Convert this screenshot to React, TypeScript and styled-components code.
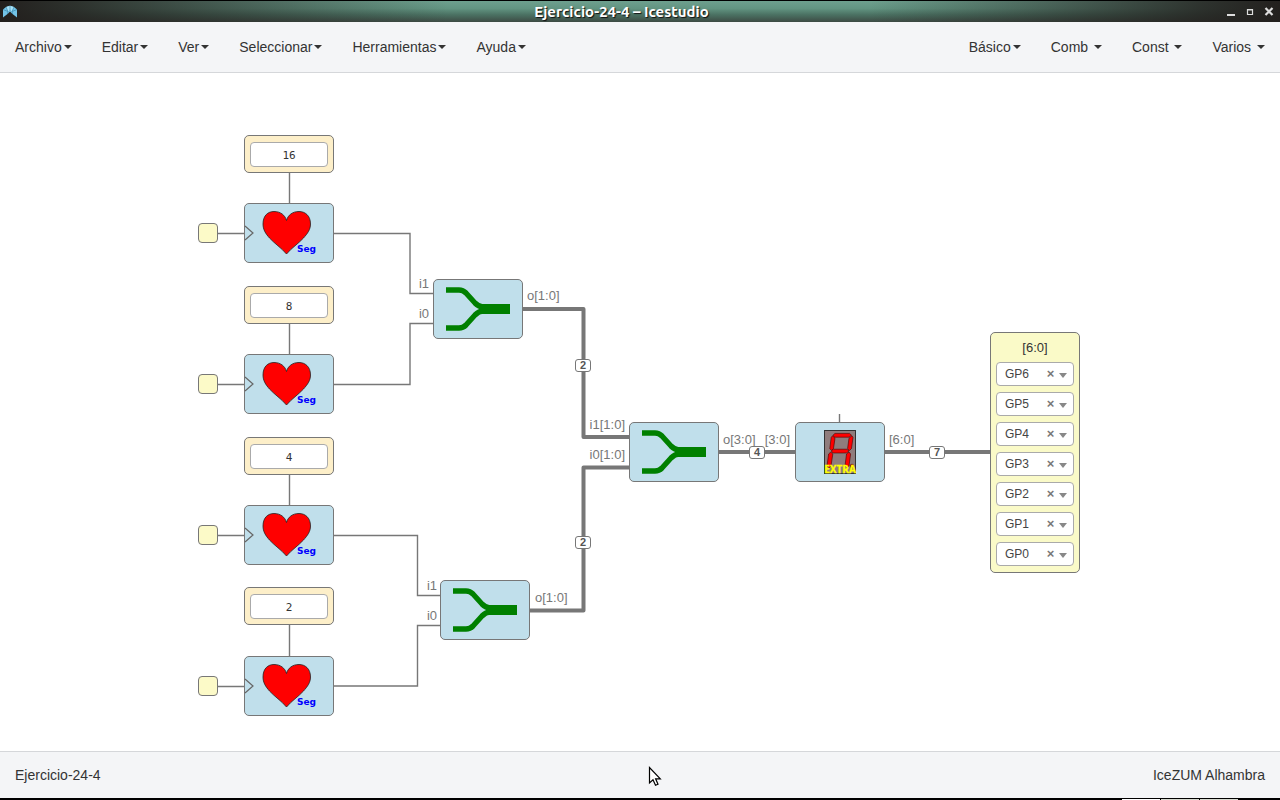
import React from "react";
import styled, { createGlobalStyle } from "styled-components";

const WIRE = "#777777";

const GlobalStyle = createGlobalStyle`
  * { box-sizing: border-box; }
  body {
    margin: 0;
    background: #fff;
    color: #333;
    font: 14px/20px "Liberation Sans", Arial, sans-serif;
  }
  button, input, select { font: inherit; color: inherit; }
`;

const Page = styled.div`
  min-height: 100vh;
  display: flex;
  flex-direction: column;
`;

/* ---------- window frame ---------- */

const TitleBar = styled.header`
  height: 22px;
  display: flex;
  align-items: center;
  border-top: 1px solid #000;
  background:
    linear-gradient(to right, #23201e 0, rgba(35, 32, 30, 0.85) 6%, rgba(35, 32, 30, 0) 35%, rgba(35, 32, 30, 0) 68%, rgba(35, 32, 30, 0.85) 94%, #23201e 100%),
    linear-gradient(#6ea08e 0, #639582 35%, #4b7263 65%, #3d4b44 100%);
`;

const AppIcon = styled.svg`
  display: block;
  width: 16px;
  height: 14px;
  margin-left: 2px;
`;

const WindowTitle = styled.h1`
  flex: 1;
  margin: 0;
  text-align: center;
  font: 700 15px/20px Ubuntu, "Noto Sans", sans-serif;
  color: #fff;
  text-shadow: 1px 1px 1px #111;
`;

const WindowButtons = styled.div`
  display: flex;
  justify-content: flex-end;
  gap: 7px;
  padding-right: 5px;
`;

const WindowButton = styled.button`
  width: 12px;
  height: 12px;
  padding: 0;
  border: 0;
  background: none;
  svg { display: block; }
`;

/* ---------- menu and status bars ---------- */

const MenuBar = styled.nav`
  display: flex;
  justify-content: space-between;
  height: 51px;
  background: #f4f5f7;
  border-bottom: 1px solid #d5d7da;
`;

const MenuGroup = styled.div`
  display: flex;
`;

const MenuButton = styled.button`
  display: flex;
  align-items: center;
  padding: 0 15px;
  border: 0;
  background: none;
  white-space: pre;
`;

const Caret = styled.span`
  margin-left: 2px;
  border: 4px solid transparent;
  border-top-color: #333;
  border-bottom: 0;
`;

const StatusBar = styled.footer`
  position: relative;
  display: flex;
  justify-content: space-between;
  align-items: center;
  height: 47px;
  padding: 0 15px;
  background: #f4f5f7;
  border-top: 1px solid #d5d7da;
`;

const Cursor = styled.svg`
  position: absolute;
  left: calc(50% + 8px);
  top: 14px;
`;

const DesktopEdge = styled.div`
  display: flex;
  justify-content: flex-end;
  align-items: flex-end;
  gap: 1px;
  height: 2px;
  padding-right: 42px;
  background: #000;
`;

const DesktopTile = styled.i<{ $active?: boolean }>`
  width: 38px;
  height: 1px;
  background: ${(p) => (p.$active ? "#fff" : "#d8dad0")};
`;

/* ---------- diagram canvas ---------- */

const Canvas = styled.main`
  position: relative;
  flex: 1 0 678px;
  background: #fff;
  overflow: hidden;
`;

const Wires = styled.svg`
  position: absolute;
  left: 0;
  top: 0;
  width: 100%;
  height: 100%;
`;

type Spot = { $x: number; $y: number };

const Node = styled.div<Spot>`
  position: absolute;
  left: ${(p) => p.$x}px;
  top: ${(p) => p.$y}px;
  border: 1px solid #777;
  border-radius: 5px;
`;

const LogicBlock = styled(Node)`
  width: 90px;
  height: 60px;
  background: #c0dfeb;
`;

const BlockArt = styled.svg`
  display: block;
  margin: -1px;
`;

const ConstantBlock = styled(Node)`
  width: 90px;
  height: 38px;
  padding: 6px 5px;
  background: #fdefc9;
`;

const ConstantInput = styled.input`
  display: block;
  width: 100%;
  height: 25px;
  padding: 2px 0 0;
  border: 1px solid #aaa;
  border-radius: 4px;
  background: #fff;
  text-align: center;
  font: 11px/20px "DejaVu Sans Mono", monospace;
`;

const InputPort = styled(Node)`
  width: 20px;
  height: 20px;
  background: #fcfac8;
  border-radius: 4px;
`;

const OutputBlock = styled(Node)`
  display: flex;
  flex-direction: column;
  gap: 6px;
  width: 90px;
  padding: 5px 5px 6px;
  background: #fafac8;
`;

const OutputTitle = styled.div`
  height: 18px;
  text-align: center;
  font-size: 13px;
  line-height: 20px;
`;

const PinRow = styled.div`
  position: relative;
  display: flex;
  height: 24px;
`;

const PinSelect = styled.select`
  appearance: none;
  width: 100%;
  padding: 0 8px;
  border: 1px solid #aaa;
  border-radius: 4px;
  background: #fff;
  color: #444;
  font-size: 12px;
  line-height: 20px;
`;

const PinClear = styled.button`
  position: absolute;
  right: 19px;
  top: 6px;
  width: 9px;
  height: 12px;
  padding: 0;
  border: 0;
  background: none;
  color: #777;
  font-size: 13px;
  font-weight: 700;
  line-height: 12px;
`;

const PinArrow = styled.span`
  position: absolute;
  right: 7px;
  top: 11px;
  border: 4px solid transparent;
  border-top: 5px solid #888;
  border-bottom: 0;
  pointer-events: none;
`;

const PortLabel = styled.span<Spot & { $end?: boolean }>`
  position: absolute;
  left: ${(p) => p.$x}px;
  top: ${(p) => p.$y}px;
  transform: ${(p) => (p.$end ? "translateX(-100%)" : "none")};
  color: #777;
  font-size: 13px;
  line-height: 16px;
  white-space: nowrap;
`;

const BusSize = styled.span<Spot>`
  position: absolute;
  left: ${(p) => p.$x}px;
  top: ${(p) => p.$y}px;
  width: 16px;
  height: 13px;
  border: 1px solid #777;
  border-radius: 3px;
  background: #fff;
  color: #555;
  text-align: center;
  font-size: 11px;
  font-weight: 700;
  line-height: 11px;
`;

/* ---------- data ---------- */

const mainMenus = ["Archivo", "Editar", "Ver", "Seleccionar", "Herramientas", "Ayuda"];
const blockMenus = ["Básico", "Comb ", "Const ", "Varios "];

const hearts = [
  { value: "16", constantY: 62, y: 130 },
  { value: "8", constantY: 213, y: 281 },
  { value: "4", constantY: 364, y: 432 },
  { value: "2", constantY: 514, y: 583 },
];

const joiners = [
  { x: 433, y: 206 },
  { x: 440, y: 507 },
  { x: 629, y: 349 },
];

const labels = [
  { text: "i1", x: 429, y: 203, end: true },
  { text: "i0", x: 429, y: 233, end: true },
  { text: "o[1:0]", x: 527, y: 215 },
  { text: "i1", x: 437, y: 505, end: true },
  { text: "i0", x: 437, y: 535, end: true },
  { text: "o[1:0]", x: 535, y: 517 },
  { text: "i1[1:0]", x: 625, y: 344, end: true },
  { text: "i0[1:0]", x: 625, y: 374, end: true },
  { text: "o[3:0]", x: 723, y: 359 },
  { text: "[3:0]", x: 790, y: 359, end: true },
  { text: "[6:0]", x: 889, y: 359 },
];

const busSizes = [
  { text: "2", x: 575, y: 286 },
  { text: "2", x: 575, y: 463 },
  { text: "4", x: 749, y: 373 },
  { text: "7", x: 929, y: 373 },
];

const pins = ["GP6", "GP5", "GP4", "GP3", "GP2", "GP1", "GP0"];

/* ---------- drawings ---------- */

const HeartArt = () => (
  <BlockArt width="90" height="60" viewBox="0 0 90 60" aria-hidden="true">
    <path d="M1 23 L9 30 L1 37" fill="none" stroke="#666" strokeWidth="1.2" />
    <path
      d="M42.500 51 C37 44.500 31 41 25.500 35 C21.500 30.500 19 26.500 19 21 C19 12.500 24 8.500 30 8.500 C36.500 8.500 41 12 42.500 17.500 C44 12 48.500 8.500 55 8.500 C61 8.500 66.500 12.500 66.500 21 C66.500 26.500 63.500 30.500 59.500 35 C54 41 48 44.500 42.500 51 Z"
      fill="#f00"
      stroke="#222"
      strokeWidth="0.8"
    />
    <text x="53" y="49" fill="#00f" fontFamily="DejaVu Sans" fontWeight="700" fontSize="9">
      Seg
    </text>
  </BlockArt>
);

const JoinArt = () => (
  <BlockArt width="90" height="60" viewBox="0 0 90 60" aria-hidden="true">
    <g fill="none" stroke="#008000" strokeWidth="5.400">
      <path d="M13 11 H26 Q30 11 33 14 L42 24 Q46 28 50 28" />
      <path d="M13 49 H26 Q30 49 33 46 L42 36 Q46 32 50 32" />
    </g>
    <path d="M48 25 H77 V35 H48 Z" fill="#008000" />
  </BlockArt>
);

const DisplayArt = () => (
  <BlockArt width="90" height="60" viewBox="0 0 90 60" aria-hidden="true">
    <rect x="29.500" y="8.500" width="31" height="43" fill="#8f7c7c" stroke="#333" />
    <g fill="#f00" stroke="#400" strokeWidth="0.6">
      <path d="M38 13.200 L40 11.400 H54.500 L56.500 13.200 L54 15.200 H39.500 Z" />
      <path d="M37.500 13.800 L40 16.200 L38.500 26.500 L36.500 28.500 L34.800 26.500 L36.200 15.500 Z" />
      <path d="M57 13.800 L58 15.500 L56.500 26.500 L54.500 28.500 L52.600 26.500 L54 16.200 Z" />
      <path d="M36.300 29 L38.500 27.200 H52 L54 29 L51.500 31 H38 Z" />
      <path d="M35.800 30 L37.800 32 L36 44 L34 46 L32 44 L33.600 32 Z" />
      <path d="M54 30 L55.600 32 L54 44 L52 46 L50 44 L51.500 32 Z" />
      <circle cx="57" cy="44" r="1.800" />
    </g>
    <text
      x="45"
      y="51"
      fill="#ff0"
      stroke="#ff0"
      strokeWidth="0.3"
      textAnchor="middle"
      fontFamily="Open Sans"
      fontWeight="700"
      fontSize="10"
    >
      EXTRA
    </text>
  </BlockArt>
);

export default function App() {
  return (
    <Page>
      <GlobalStyle />
      <TitleBar>
        <AppIcon viewBox="0 0 16 14" aria-hidden="true">
          <path d="M1 4.500 L4 2 L8 0.800 L12 2 L15 4.500 V12.500 L10.500 9 L8 6.500 L5.500 9 L1 12.500 Z" fill="#74c4e8" />
          <path d="M4 2 L8 0.800 L12 2 L10 6.500 L8 5 L6 6.500 Z" fill="#a8e2f8" />
          <path d="M4 2 L6 6.500 L1 4.500 M12 2 L10 6.500 L15 4.500 M8 0.800 V6 M6 6.500 L5.500 9 M10 6.500 L10.500 9" fill="none" stroke="#2f7fa5" strokeWidth="0.6" />
        </AppIcon>
        <WindowTitle>Ejercicio-24-4 – Icestudio</WindowTitle>
        <WindowButtons>
          <WindowButton aria-label="Minimizar">
            <svg width="12" height="12"><path d="M2 9 H10" stroke="#ddd" strokeWidth="2" /></svg>
          </WindowButton>
          <WindowButton aria-label="Maximizar">
            <svg width="12" height="12"><path d="M3.500 3.500 H8.500 V8.500 H3.500 Z M3 4 H9" fill="none" stroke="#ddd" strokeWidth="1.200" /></svg>
          </WindowButton>
          <WindowButton aria-label="Cerrar">
            <svg width="12" height="12"><path d="M2.500 2 L9.500 9 M9.500 2 L2.500 9" stroke="#ddd" strokeWidth="2.200" /></svg>
          </WindowButton>
        </WindowButtons>
      </TitleBar>

      <MenuBar>
        <MenuGroup>
          {mainMenus.map((m) => (
            <MenuButton key={m}>{m}<Caret /></MenuButton>
          ))}
        </MenuGroup>
        <MenuGroup>
          {blockMenus.map((m) => (
            <MenuButton key={m}>{m}<Caret /></MenuButton>
          ))}
        </MenuGroup>
      </MenuBar>

      <Canvas>
        <Wires aria-hidden="true">
          <g fill="none" stroke={WIRE} strokeWidth="1.400">
            {hearts.map((h) => (
              <path
                key={h.value}
                d={`M289.500 ${h.constantY + 38} V${h.y} M218 ${h.y + 30.5} H244`}
              />
            ))}
            <path d="M334 160.500 H410 V220.500 H433" />
            <path d="M334 311.500 H410 V250.500 H433" />
            <path d="M334 462.500 H417.500 V522.500 H440" />
            <path d="M334 613 H417.500 V552.500 H440" />
            <path d="M839.500 341 V349" />
          </g>
          <g fill="none" stroke={WIRE} strokeWidth="4" strokeLinejoin="round">
            <path d="M523 236 H583.500 V364 H629" />
            <path d="M530 537.500 H583.500 V394.500 H629" />
            <path d="M719 379 H795 M885 379 H990" />
          </g>
        </Wires>

        {hearts.map((h) => (
          <React.Fragment key={h.value}>
            <ConstantBlock $x={244} $y={h.constantY}>
              <ConstantInput aria-label={`Constante ${h.value}`} defaultValue={h.value} />
            </ConstantBlock>
            <InputPort $x={198} $y={h.y + 20} />
            <LogicBlock $x={244} $y={h.y}><HeartArt /></LogicBlock>
          </React.Fragment>
        ))}
        {joiners.map((j) => (
          <LogicBlock key={j.y} $x={j.x} $y={j.y}><JoinArt /></LogicBlock>
        ))}
        <LogicBlock $x={795} $y={349}><DisplayArt /></LogicBlock>

        {labels.map((l) => (
          <PortLabel key={`${l.x}-${l.y}`} $x={l.x} $y={l.y} $end={l.end}>{l.text}</PortLabel>
        ))}
        {busSizes.map((b) => (
          <BusSize key={`${b.x}-${b.y}`} $x={b.x} $y={b.y}>{b.text}</BusSize>
        ))}

        <OutputBlock $x={990} $y={259}>
          <OutputTitle>[6:0]</OutputTitle>
          {pins.map((pin) => (
            <PinRow key={pin}>
              <PinSelect aria-label={`Pin ${pin}`} defaultValue={pin}>
                {pins.map((p) => <option key={p}>{p}</option>)}
              </PinSelect>
              <PinClear aria-label={`Quitar ${pin}`}>×</PinClear>
              <PinArrow />
            </PinRow>
          ))}
        </OutputBlock>
      </Canvas>

      <StatusBar>
        <span>Ejercicio-24-4</span>
        <span>IceZUM Alhambra</span>
        <Cursor width="14" height="21" viewBox="0 0 14 21" aria-hidden="true">
          <path
            d="M1.500 1.500 V17 L5 13.800 L7.500 19.300 L10 18.200 L7.600 12.800 H12.300 Z"
            fill="#fff"
            stroke="#000"
            strokeWidth="1.200"
          />
        </Cursor>
      </StatusBar>
      <DesktopEdge>
        <DesktopTile $active />
        <DesktopTile />
        <DesktopTile />
      </DesktopEdge>
    </Page>
  );
}
